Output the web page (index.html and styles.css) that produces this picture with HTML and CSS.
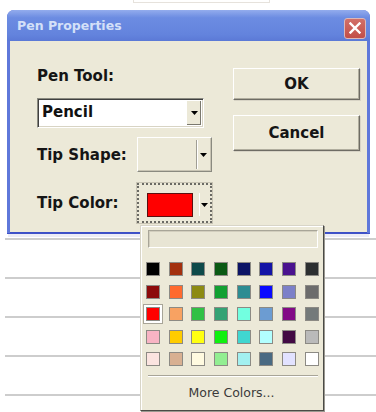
FILE: index.html
```html
<!DOCTYPE html>
<html lang="en">
<head>
  <meta charset="UTF-8" />
  <meta name="viewport" content="width=device-width, initial-scale=1" />
  <title>Pen Properties</title>
  <link rel="stylesheet" href="styles.css">
</head>
<body>
  <div class="tab-edge"></div>

  <div class="dialog">
    <div class="titlebar">
      <span class="title">Pen Properties</span>
      <button class="close" aria-label="Close">
        <svg width="12" height="12" viewBox="0 0 12 12"><path d="M1.5 1.5 L10.5 10.5 M10.5 1.5 L1.5 10.5" stroke="#fff" stroke-width="2.4" stroke-linecap="square"/></svg>
      </button>
    </div>

    <div class="content">
      <div class="fields">
        <label class="label">Pen Tool:</label>
        <div class="select select-tool">
          <span class="value">Pencil</span>
          <span class="drop"><svg width="7" height="4" viewBox="0 0 7 4"><path d="M0 0 H7 L3.5 4 Z" fill="#000"/></svg></span>
        </div>

        <div class="row row-shape">
          <label class="label">Tip Shape:</label>
          <div class="select select-shape">
            <span class="value"></span>
            <span class="drop"><svg width="7" height="4" viewBox="0 0 7 4"><path d="M0 0 H7 L3.5 4 Z" fill="#000"/></svg></span>
          </div>
        </div>

        <div class="row row-color">
          <label class="label">Tip Color:</label>
          <div class="color-pick">
            <span class="chip"></span>
            <span class="drop"><svg width="7" height="4" viewBox="0 0 7 4"><path d="M0 0 H7 L3.5 4 Z" fill="#000"/></svg></span>
          </div>
        </div>
      </div>

      <div class="actions">
        <button class="btn btn-ok">OK</button>
        <button class="btn btn-cancel">Cancel</button>
      </div>
    </div>
  </div>

  <div class="sheet">
    <div class="line"></div>
    <div class="line"></div>
    <div class="line"></div>
    <div class="line"></div>
    <div class="line"></div>
  </div>

  <!-- colour drop-down, open over the dialog -->
  <div class="palette">
    <div class="auto-bar"></div>
    <div class="swatches">
      <span class="sw" style="background:#000000"></span>
      <span class="sw" style="background:#a3300e"></span>
      <span class="sw" style="background:#0e4a4a"></span>
      <span class="sw" style="background:#0b5a14"></span>
      <span class="sw" style="background:#0c1466"></span>
      <span class="sw" style="background:#1414a6"></span>
      <span class="sw" style="background:#4a128e"></span>
      <span class="sw" style="background:#2c2f30"></span>

      <span class="sw" style="background:#8c0a0a"></span>
      <span class="sw" style="background:#ff6a2e"></span>
      <span class="sw" style="background:#8c8a12"></span>
      <span class="sw" style="background:#12a032"></span>
      <span class="sw" style="background:#2c8c92"></span>
      <span class="sw" style="background:#0a0aff"></span>
      <span class="sw" style="background:#7c80c8"></span>
      <span class="sw" style="background:#6c6c6c"></span>

      <span class="sw sw-active" style="background:#ff0000"></span>
      <span class="sw" style="background:#f8a262"></span>
      <span class="sw" style="background:#30c044"></span>
      <span class="sw" style="background:#34a274"></span>
      <span class="sw" style="background:#72ffe0"></span>
      <span class="sw" style="background:#6c9cd2"></span>
      <span class="sw" style="background:#820a86"></span>
      <span class="sw" style="background:#747a7a"></span>

      <span class="sw" style="background:#f8b4c4"></span>
      <span class="sw" style="background:#ffcc00"></span>
      <span class="sw" style="background:#ffff10"></span>
      <span class="sw" style="background:#10f010"></span>
      <span class="sw" style="background:#40d6d0"></span>
      <span class="sw" style="background:#b2ffff"></span>
      <span class="sw" style="background:#420a44"></span>
      <span class="sw" style="background:#bababa"></span>

      <span class="sw" style="background:#fbe4e0"></span>
      <span class="sw" style="background:#d8b092"></span>
      <span class="sw" style="background:#fffae0"></span>
      <span class="sw" style="background:#92ee92"></span>
      <span class="sw" style="background:#a2f0f0"></span>
      <span class="sw" style="background:#4a6a82"></span>
      <span class="sw" style="background:#e2e2ff"></span>
      <span class="sw" style="background:#ffffff"></span>
    </div>
    <div class="separator"></div>
    <div class="more">More Colors...</div>
  </div>
</body>
</html>
```

FILE: styles.css
```css
/* Reset & base */
* {
  margin: 0;
  padding: 0;
  box-sizing: border-box;
}

body {
  font-family: 'DejaVu Sans', Verdana, sans-serif;
  background: #fff;
  color: #111;
  width: 376px;
  height: 412px;
  overflow: hidden;
  position: relative;
}

button {
  font-family: inherit;
}

/* faint edge of a tab behind the window */
.tab-edge {
  width: 137px;
  height: 3px;
  margin-left: 133px;
  border: 1px solid #e6e2dc;
  border-top: none;
}

/* Window frame */
.dialog {
  margin: 7px 0 0 7px;
  width: 363px;
  background: #5f78da;
  border-radius: 7px 7px 0 0;
  box-shadow: 0 1px 0 #3f52c8, 0 5px 0 -1px #ececf6;
}

.titlebar {
  height: 31px;
  display: flex;
  align-items: center;
  justify-content: space-between;
  padding: 0 4px 0 10px;
  border-radius: 7px 7px 0 0;
  background: linear-gradient(#93aced, #6c8ce2 25%, #6383dd 80%, #5b79d6);
}

.title {
  font-size: 12.5px;
  font-weight: 700;
  color: #d4e0f8;
}

.close {
  width: 22px;
  height: 21px;
  margin-top: 5px;
  border: 1px solid #dcb8b8;
  border-radius: 3px;
  background: linear-gradient(#d27068, #c24e48);
  display: flex;
  align-items: center;
  justify-content: center;
}

.content {
  margin: 0 3px 3px;
  height: 192px;
  background: #ece9d8;
  padding: 26px 0 0 27px;
  display: flex;
  gap: 21px;
  border-bottom: 1px solid #3c50c6;
}

.label {
  font-size: 15px;
  font-weight: 700;
  line-height: 18px;
  color: #151515;
}

/* Left column */
.fields {
  width: 175px;
  display: flex;
  flex-direction: column;
}

.select {
  display: flex;
  align-items: stretch;
  border: 1px solid;
  border-color: #8a8a80 #fff #fff #8a8a80;
  box-shadow: inset 1px 1px 0 #404040, inset -1px -1px 0 #d8d4c4;
}

.select .value {
  flex: 1;
  font-size: 15px;
  font-weight: 700;
  padding: 4px 0 0 4px;
}

.select .drop,
.color-pick .drop {
  display: flex;
  align-items: center;
  justify-content: center;
  width: 15px;
  background: #ece9d8;
  border-left: 1px solid #fff;
  box-shadow: inset -1px -1px 0 #7a786e;
}

.select-tool {
  width: 167px;
  height: 30px;
  margin-top: 13px;
  background: #fff;
}

.select-tool .drop {
  margin: 2px 2px 2px 0;
}

.row {
  display: flex;
  align-items: center;
}

.row .label {
  width: 100px;
}

.row-shape {
  margin-top: 9px;
}

.select-shape {
  width: 75px;
  height: 35px;
  background: #ece9d8;
  border-color: #fff #8a8a80 #8a8a80 #fff;
  box-shadow: inset -1px -1px 0 #c8c4b4;
}

.select-shape .drop {
  width: 13px;
  margin: 2px 2px 2px 0;
  border-left: 1px solid #a09e94;
  box-shadow: inset 1px 0 0 #fff;
}

.row-color {
  margin-top: 11px;
}

.color-pick {
  width: 75px;
  height: 40px;
  display: flex;
  align-items: center;
  padding: 8px 2px 5px 8px;
  border: 2px dotted #6a6a64;
  outline: 1px solid #c8c4b4;
}

.chip {
  width: 48px;
  height: 24px;
  background: #ff0000;
  border: 1px solid #5a1010;
}

.color-pick .drop {
  align-self: stretch;
  margin-left: 6px;
  width: 9px;
  border-left: 1px solid #fff;
  box-shadow: none;
}

/* Right column */
.actions {
  display: flex;
  flex-direction: column;
  gap: 15px;
  padding-top: 1px;
}

.btn {
  width: 127px;
  font-size: 15px;
  font-weight: 700;
  color: #151515;
  background: #ece9d8;
  border: 1px solid;
  border-color: #fff #6e6c64 #6e6c64 #fff;
  box-shadow: inset -1px -1px 0 #b0ad9e, 1px 1px 0 #d8d4c6;
  cursor: pointer;
}

.btn-ok {
  height: 32px;
}

.btn-cancel {
  height: 36px;
}

/* Lined page behind the dialog */
.sheet {
  margin: 5px 0 0 5px;
  height: 170px;
  overflow: hidden;
}

.line {
  height: 39px;
  border-top: 2px solid #cdcdcd;
}

/* Colour drop-down */
.palette {
  position: absolute;
  left: 140px;
  top: 225px;
  width: 184px;
  height: 186px;
  background: #ece9d8;
  border: 1px solid;
  border-color: #d8d5c8 #4a4a46 #4a4a46 #d8d5c8;
  box-shadow: 1px 1px 0 #9a9890, inset 1px 1px 0 #fff;
  padding: 4px 0 0 5px;
}

.auto-bar {
  width: 170px;
  height: 18px;
  margin-left: 2px;
  border: 1px solid;
  border-color: #a8a598 #fff #fff #a8a598;
  box-shadow: inset 1px 1px 0 #d2cebe;
  background: #e8e5d4;
}

.swatches {
  margin-top: 14px;
  display: grid;
  grid-template-columns: repeat(8, 14px);
  column-gap: 8.7px;
  row-gap: 8.5px;
}

.sw {
  width: 14px;
  height: 14px;
  border: 1px solid #8c8a84;
}

.sw-active {
  box-shadow: 0 0 0 2px #fff, 0 0 0 3px #a8a598;
}

.separator {
  margin: 9px 0 0 2px;
  width: 170px;
  height: 2px;
  border-top: 1px solid #a8a598;
  border-bottom: 1px solid #fff;
}

.more {
  margin-top: 7px;
  text-align: center;
  padding-right: 6px;
  font-size: 12.5px;
  line-height: 18px;
  color: #3a3a3a;
}
```
